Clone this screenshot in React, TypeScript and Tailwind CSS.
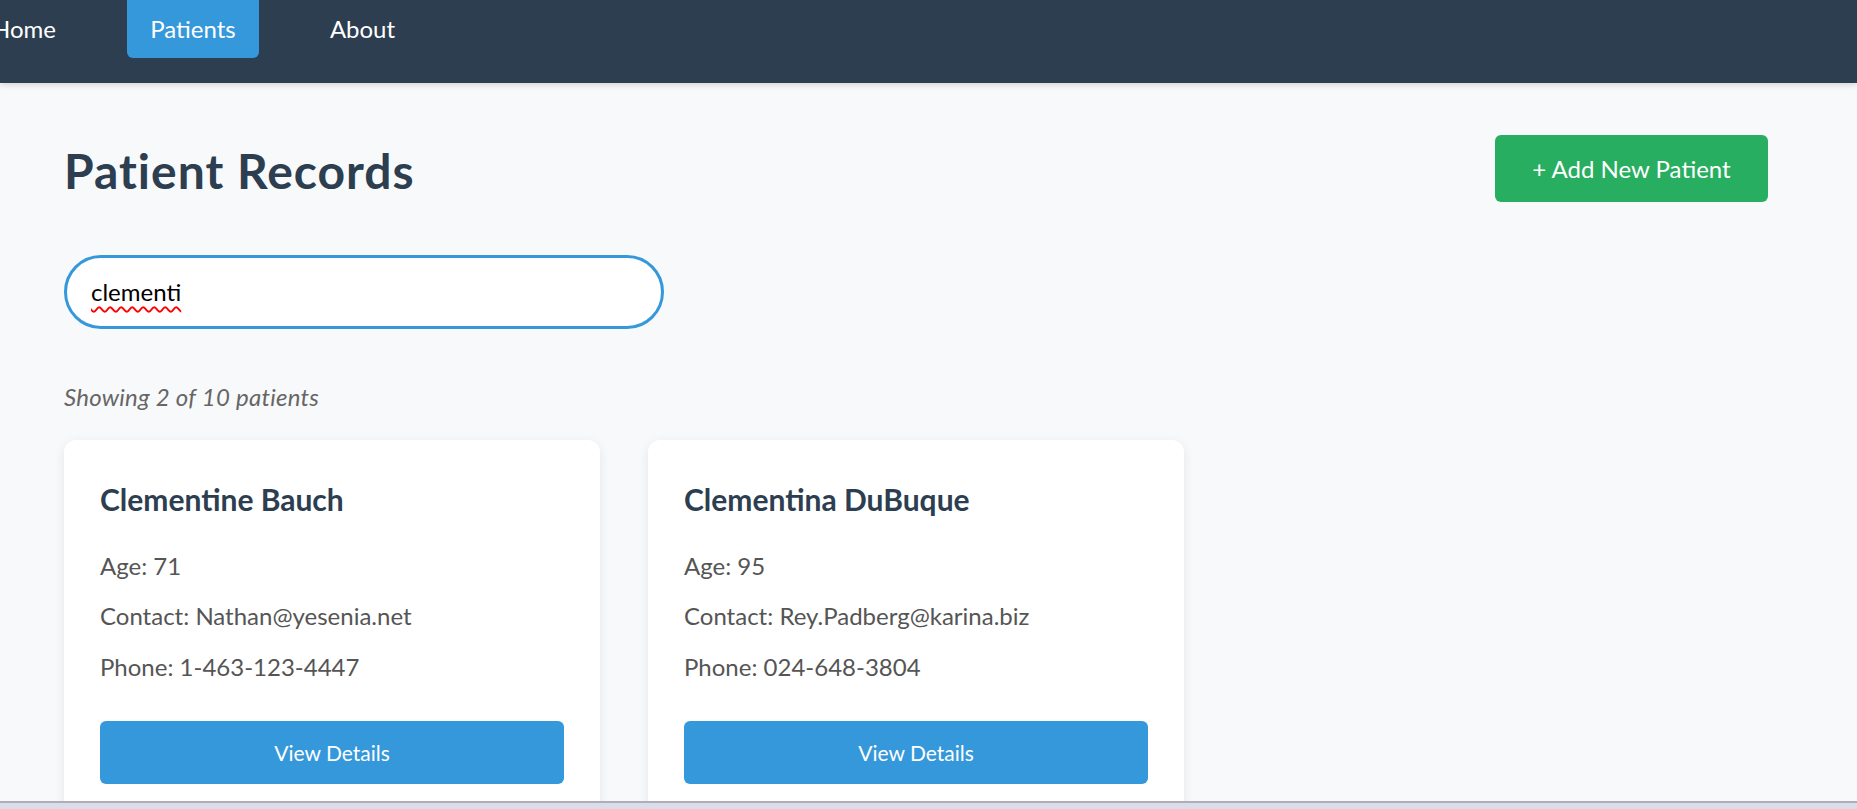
import { useState } from "react";

const patients = [
  {
    id: 1,
    name: "Clementine Bauch",
    age: 71,
    email: "Nathan@yesenia.net",
    phone: "1-463-123-4447",
  },
  {
    id: 2,
    name: "Clementina DuBuque",
    age: 95,
    email: "Rey.Padberg@karina.biz",
    phone: "024-648-3804",
  },
];

const links = [
  { label: "Home", width: "w-[112px]" },
  { label: "Patients", width: "w-[132px]" },
  { label: "About", width: "w-[113px]" },
];

function Navbar() {
  return (
    <nav className="relative z-10 h-[83px] bg-[#2c3e50] shadow-[0_2px_6px_rgba(0,0,0,0.15)]">
      <ul className="flex gap-[47px] -ml-[32px]">
        {links.map((link) => (
          <li key={link.label}>
            <a
              className={`block ${link.width} h-[58px] leading-[58px] text-center text-[24px] text-white rounded-b-[6px] ${
                link.label === "Patients" ? "bg-[#3498db]" : ""
              }`}
            >
              {link.label}
            </a>
          </li>
        ))}
      </ul>
    </nav>
  );
}

function PatientCard({ p }: { p: (typeof patients)[number] }) {
  return (
    <div className="bg-white rounded-[12px] p-[36px] pt-[37px] shadow-[0_3px_12px_rgba(0,0,0,0.08)]">
      <h3 className="text-[30px] leading-[45px] font-bold text-[#2c3e50] mb-[25px]">
        {p.name}
      </h3>
      <div className="flex flex-col gap-[12px] text-[24px] leading-[38.4px] text-[#555]">
        <p>Age: {p.age}</p>
        <p>Contact: {p.email}</p>
        <p>Phone: {p.phone}</p>
      </div>
      <button className="mt-[35px] w-full h-[63px] rounded-[6px] bg-[#3498db] text-white text-[21px]">
        View Details
      </button>
    </div>
  );
}

export default function App() {
  const [query] = useState("clementi");

  return (
    <div className="min-h-screen overflow-hidden bg-[#f8f9fa] font-['Lato',sans-serif]">
      <Navbar />

      <main className="pl-[64px] pr-[89px] pt-[52px]">
        {/* Header */}
        <div className="flex items-center justify-between h-[67px] mb-[53px]">
          <h1 className="text-[48px] leading-[1.2] font-bold tracking-[1px] text-[#2c3e50] mt-[4px]">
            Patient Records
          </h1>
          <button className="w-[273px] h-[67px] rounded-[6px] bg-[#27ae60] text-white text-[24px]">
            + Add New Patient
          </button>
        </div>

        {/* Search */}
        <div className="flex items-center w-[600px] h-[74px] pl-[24px] bg-white border-[3px] border-[#3498db] rounded-full text-[24px] text-black">
          <span className="underline decoration-wavy decoration-[#ff0000] decoration-[1.5px] underline-offset-[5px]">
            {query}
          </span>
        </div>

        <p className="mt-[50px] mb-[25px] text-[24px] leading-[36px] italic tracking-[0.25px] text-[#666]">
          Showing 2 of 10 patients
        </p>

        {/* Cards */}
        <div className="grid grid-cols-3 gap-[48px]">
          {patients.map((p) => (
            <PatientCard key={p.id} p={p} />
          ))}
        </div>
      </main>

      {/* taskbar edge */}
      <div className="fixed bottom-0 left-0 right-0 h-[8px] bg-[#dcdde9] border-t-2 border-[#aeaeb8]" />
    </div>
  );
}
